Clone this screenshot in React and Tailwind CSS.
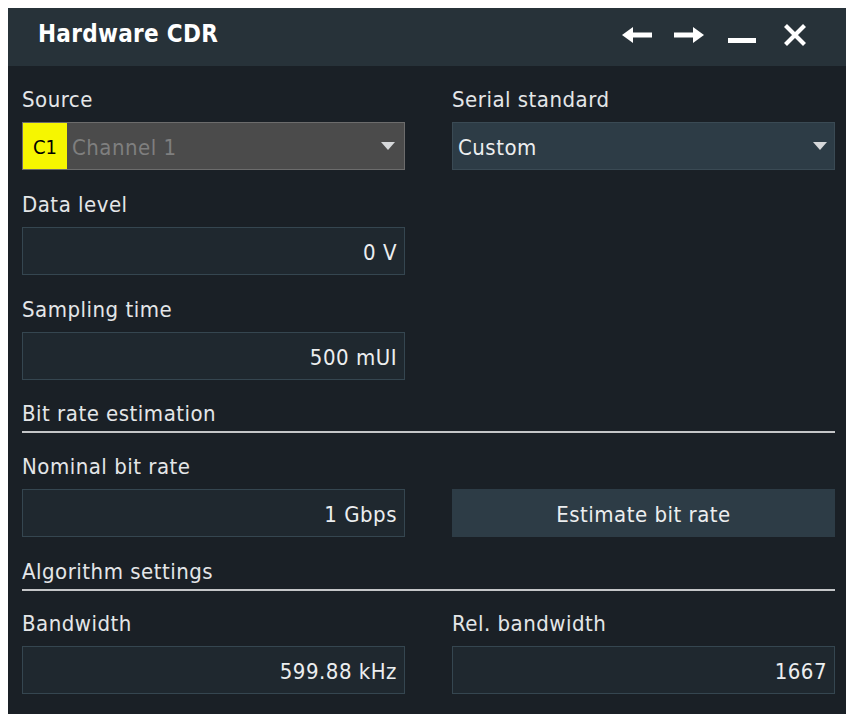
import React from "react";

const font = { fontFamily: '"DejaVu Sans Condensed", "DejaVu Sans", sans-serif', fontStretch: "condensed" };

function Label({ children }) {
  return (
    <div className="h-[34px] mb-[5px] flex items-center text-[22px] tracking-[0.5px] text-[#e4e6e8] leading-none">
      {children}
    </div>
  );
}

function Input({ value }) {
  return (
    <div className="h-[48px] bg-[#1f282f] border border-[#354650] flex items-center justify-end pr-[7px] pt-[3px] text-[22px] tracking-[0.5px] text-[#eceeef] leading-none">
      {value}
    </div>
  );
}

function Caret() {
  return (
    <svg width="14" height="8" viewBox="0 0 14 8" className="shrink-0">
      <polygon points="0,0 14,0 7,8" fill="#d6d8da" />
    </svg>
  );
}

function Heading({ children }) {
  return (
    <div className="border-b-2 border-[#c4c6c8]">
      <div className="h-[34px] flex items-center text-[22px] tracking-[0.5px] text-[#e4e6e8] leading-none">{children}</div>
    </div>
  );
}

export default function App() {
  return (
    <div className="w-[856px] h-[724px] bg-white" style={font}>
      <div className="absolute left-[8px] top-[8px] w-[838px] h-[706px] bg-[#1a2026] flex flex-col">
        {/* title bar */}
        <div className="h-[58px] bg-[#273239] flex items-center pl-[30px] pr-[39px] shrink-0">
          <div className="text-[24px] tracking-[0.3px] font-bold text-white leading-none -mt-[6px] flex-1">Hardware CDR</div>
          <div className="flex items-center -mt-[4px]">
            <svg width="30" height="16" viewBox="0 0 30 16">
              <polygon points="0,8 11,0 11,16" fill="#fff" />
              <rect x="10" y="5.5" width="20" height="5" fill="#fff" />
            </svg>
            <svg width="30" height="16" viewBox="0 0 30 16" className="ml-[22px]">
              <polygon points="30,8 19,0 19,16" fill="#fff" />
              <rect x="0" y="5.5" width="20" height="5" fill="#fff" />
            </svg>
            <svg width="28" height="22" viewBox="0 0 28 22" className="ml-[24px]">
              <rect x="0" y="14" width="28" height="5" fill="#fff" />
            </svg>
            <svg width="24" height="22" viewBox="0 0 24 22" className="ml-[27px]">
              <path d="M2.5 1.5 L21.5 20.5 M21.5 1.5 L2.5 20.5" stroke="#fff" strokeWidth="4.2" />
            </svg>
          </div>
        </div>

        {/* body */}
        <div className="pl-[14px] pr-[11px] pt-[17px] flex flex-col">
          <div className="grid grid-cols-2 gap-x-[47px]">
            <div>
              <Label>Source</Label>
              <div className="h-[48px] bg-[#4b4b4b] border border-[#6c6c6c] flex items-center pr-[9px]">
                <div className="h-full w-[44px] bg-[#f6f600] flex items-center justify-center pt-[2px] text-[20px] text-black leading-none">C1</div>
                <div className="flex-1 pl-[5px] pt-[3px] text-[22px] tracking-[0.5px] text-[#7f7f7f] leading-none">Channel 1</div>
                <Caret />
              </div>
            </div>
            <div>
              <Label>Serial standard</Label>
              <div className="h-[48px] bg-[#2d3c46] border border-[#3a4a54] flex items-center pl-[5px] pr-[7px]">
                <div className="flex-1 pt-[3px] text-[22px] tracking-[0.5px] text-[#eceeef] leading-none">Custom</div>
                <Caret />
              </div>
            </div>
          </div>

          <div className="grid grid-cols-2 gap-x-[47px] mt-[18px]">
            <div>
              <Label>Data level</Label>
              <Input value="0 V" />
            </div>
          </div>

          <div className="grid grid-cols-2 gap-x-[47px] mt-[18px]">
            <div>
              <Label>Sampling time</Label>
              <Input value="500 mUI" />
            </div>
          </div>

          <div className="mt-[17px]">
            <Heading>Bit rate estimation</Heading>
          </div>

          <div className="grid grid-cols-2 gap-x-[47px] mt-[17px]">
            <div>
              <Label>Nominal bit rate</Label>
              <Input value="1 Gbps" />
            </div>
            <div className="flex flex-col justify-end">
              <div className="h-[48px] bg-[#2d3c46] flex items-center justify-center pt-[3px] text-[22px] tracking-[0.5px] text-[#eceeef] leading-none">
                Estimate bit rate
              </div>
            </div>
          </div>

          <div className="mt-[18px]">
            <Heading>Algorithm settings</Heading>
          </div>

          <div className="grid grid-cols-2 gap-x-[47px] mt-[16px]">
            <div>
              <Label>Bandwidth</Label>
              <Input value="599.88 kHz" />
            </div>
            <div>
              <Label>Rel. bandwidth</Label>
              <Input value="1667" />
            </div>
          </div>
        </div>
      </div>
    </div>
  );
}
